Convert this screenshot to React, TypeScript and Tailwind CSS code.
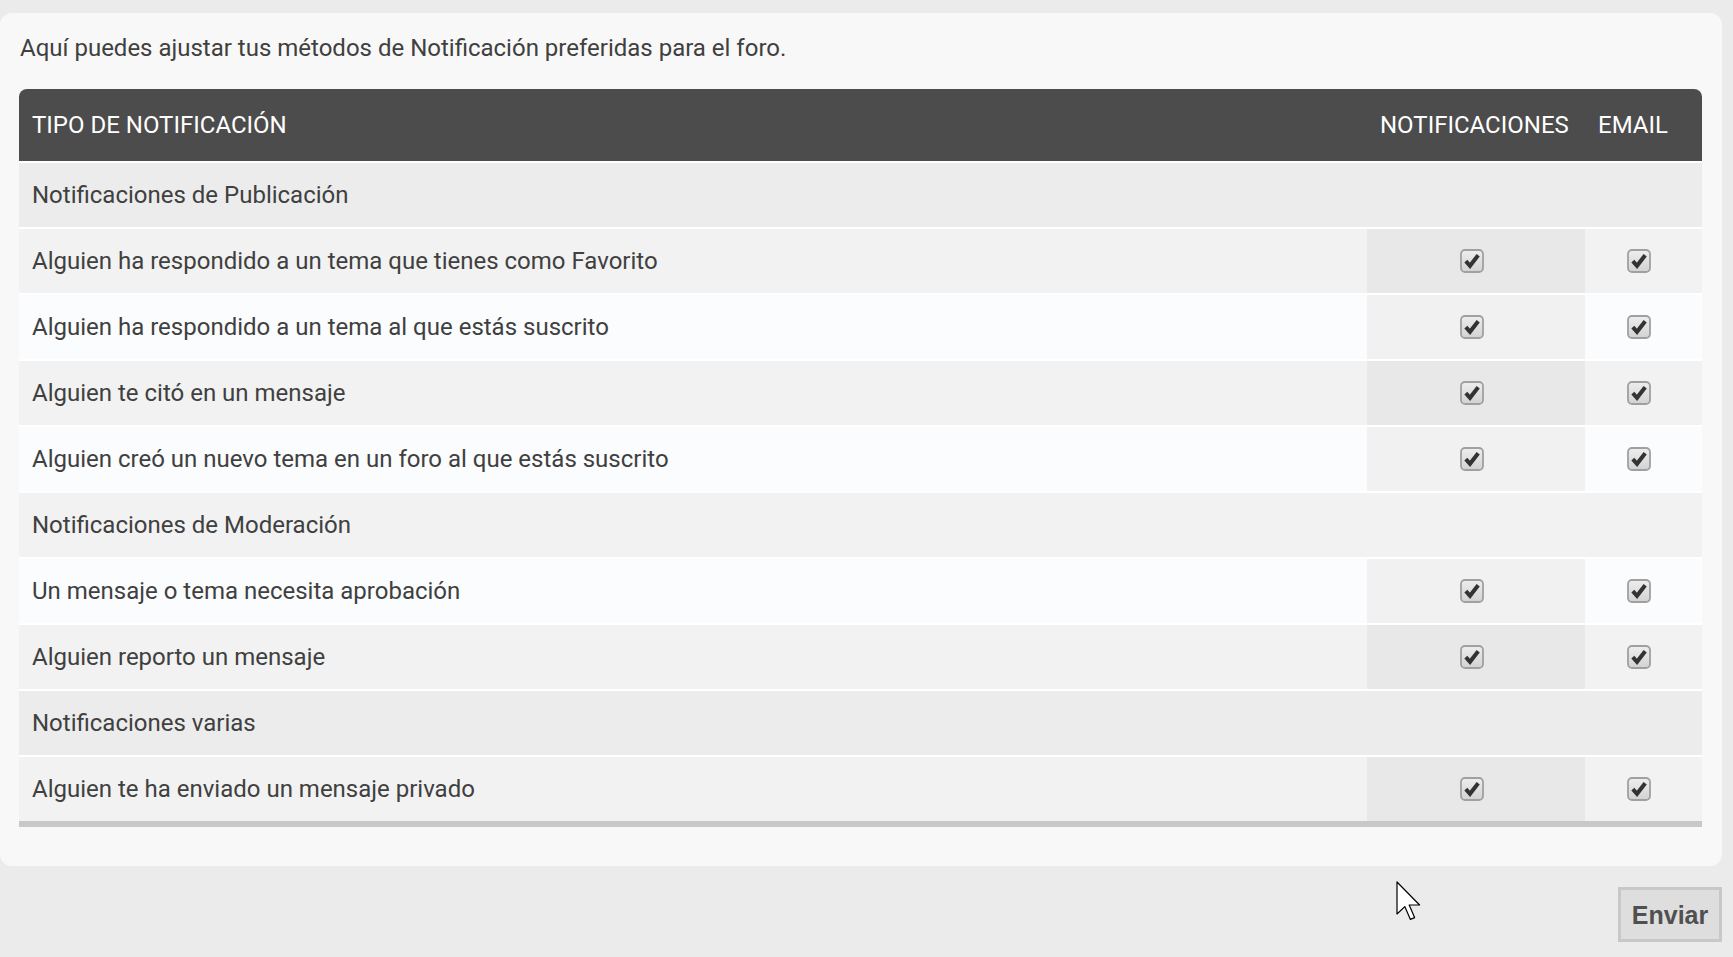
type Row = { label: string; section?: boolean };

const rows: Row[] = [
  { label: "Notificaciones de Publicación", section: true },
  { label: "Alguien ha respondido a un tema que tienes como Favorito" },
  { label: "Alguien ha respondido a un tema al que estás suscrito" },
  { label: "Alguien te citó en un mensaje" },
  { label: "Alguien creó un nuevo tema en un foro al que estás suscrito" },
  { label: "Notificaciones de Moderación", section: true },
  { label: "Un mensaje o tema necesita aprobación" },
  { label: "Alguien reporto un mensaje" },
  { label: "Notificaciones varias", section: true },
  { label: "Alguien te ha enviado un mensaje privado" },
];

function CheckBox() {
  return (
    <svg width="24" height="25" viewBox="0 0 24 25" aria-hidden="true">
      <defs>
        <linearGradient id="cbfill" x1="0" y1="0" x2="0" y2="1">
          <stop offset="0" stopColor="#eeeeee" />
          <stop offset="1" stopColor="#d2d2d2" />
        </linearGradient>
      </defs>
      <rect x="1" y="2" width="22" height="22" rx="4" fill="#ffffff" opacity="0.7" />
      <rect x="1" y="1" width="22" height="22" rx="4" fill="url(#cbfill)" stroke="#a0a0a0" strokeWidth="1.8" />
      <path d="M5.8 12.2 L10 16.8 L18.2 6.2" fill="none" stroke="#333333" strokeWidth="4" />
    </svg>
  );
}

function Cursor() {
  return (
    <svg width="26" height="40" viewBox="0 0 13 20" className="pointer-events-none absolute left-[1396px] top-[881px]">
      <path
        d="M0.5 0.5 L0.5 16.5 L4.4 12.8 L7.2 19.2 L9.3 18.3 L6.6 12 L11.8 12 Z"
        fill="#ffffff"
        stroke="#000000"
        strokeWidth="0.6"
        strokeLinejoin="round"
      />
    </svg>
  );
}

export default function App() {
  return (
    <div className="relative min-h-[957px] bg-[#ebebeb] pr-[11px] pt-[13px] font-['Roboto',sans-serif] text-[24px] leading-[28px] text-[#404040]">
      <div className="rounded-[12px] bg-[#f8f8f8] pb-[39px] pl-[19px] pr-5 pt-[21px]">
        <p className="pl-px">Aquí puedes ajustar tus métodos de Notificación preferidas para el foro.</p>

        <div className="mt-[27px] border-b-[6px] border-[#c8c8c8]">
          <div className="grid h-[72px] grid-cols-[1fr_218px_117px] items-center rounded-t-[8px] bg-[#4c4c4c] text-white">
            <div className="pl-[13px]">TIPO DE NOTIFICACIÓN</div>
            <div className="pl-[13px]">NOTIFICACIONES</div>
            <div className="pl-[13px]">EMAIL</div>
          </div>

          {rows.map((row, i) => {
            const odd = i % 2 === 0;
            if (row.section) {
              return (
                <div
                  key={row.label}
                  className={`flex h-[66px] items-center border-t-2 border-white pl-[13px] ${
                    odd ? "bg-[#ececec]" : "bg-[#f2f2f2]"
                  }`}
                >
                  {row.label}
                </div>
              );
            }
            return (
              <div
                key={row.label}
                className={`grid h-[66px] grid-cols-[1fr_218px_117px] border-t-2 border-white ${
                  odd ? "bg-[#fbfcfd]" : "bg-[#f2f2f2]"
                }`}
              >
                <div className="flex items-center pl-[13px]">{row.label}</div>
                <div className={`flex items-center justify-center pr-2 ${odd ? "bg-[#f1f1f1]" : "bg-[#e8e8e8]"}`}>
                  <CheckBox />
                </div>
                <div className="flex items-center justify-center pr-[10px]">
                  <CheckBox />
                </div>
              </div>
            );
          })}
        </div>
      </div>

      <div className="mt-[21px] flex justify-end">
        <button
          type="button"
          className="flex h-[55px] w-[104px] items-center justify-center border-[3px] border-[#c8c8c8] bg-[#dedede] font-['Liberation_Sans',sans-serif] text-[25px] font-bold text-[#505050]"
        >
          Enviar
        </button>
      </div>

      <Cursor />
    </div>
  );
}
